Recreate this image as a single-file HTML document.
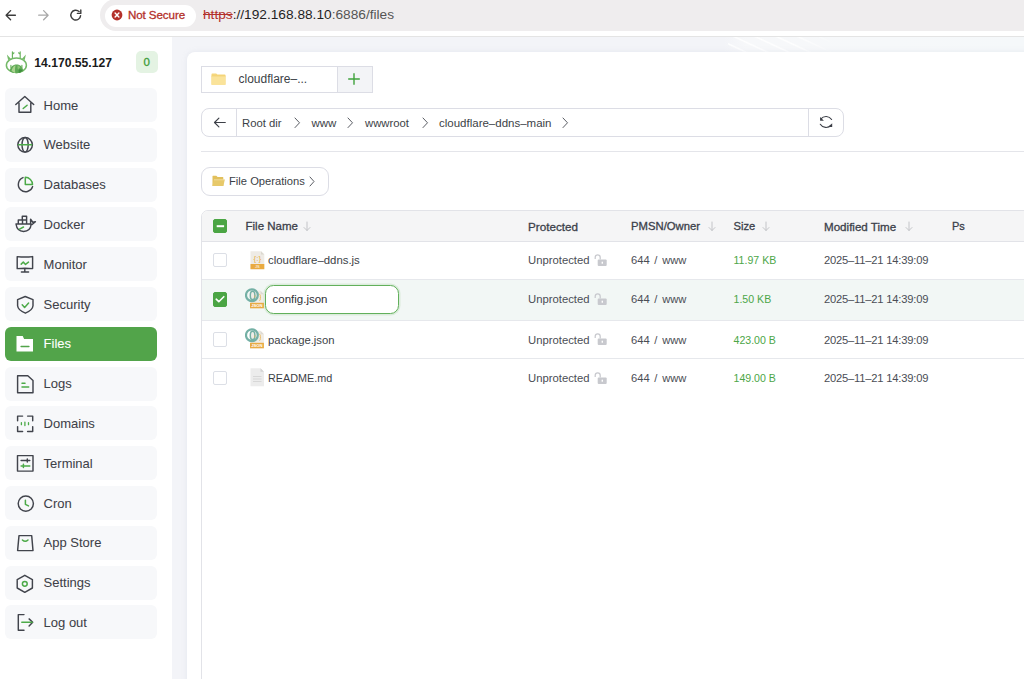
<!DOCTYPE html>
<html><head><meta charset="utf-8">
<style>
*{box-sizing:border-box;margin:0;padding:0}
html,body{width:1024px;height:679px;overflow:hidden;background:#fff;font-family:"Liberation Sans",sans-serif}
.abs{position:absolute}
#chrome{position:absolute;left:0;top:0;width:1024px;height:37px;background:#fff;border-bottom:1px solid #e4e4e4}
#omni{position:absolute;left:100px;top:-1px;width:1000px;height:32px;border-radius:16px;background:#efedee}
#chip{position:absolute;left:104.5px;top:4.5px;width:91px;height:22px;border-radius:11px;background:#fff}
#ns{position:absolute;left:128px;top:7.9px;font-size:11.6px;color:#b3302a;line-height:13px;white-space:nowrap;-webkit-text-stroke:.3px #b3302a;letter-spacing:-.1px}
#url{position:absolute;left:203px;top:7px;font-size:13.7px;line-height:16px;color:#1f1f1f;white-space:nowrap}
#url .s{color:#b3302a;text-decoration:line-through}
#url .g{color:#555}
#side{position:absolute;left:0;top:37px;width:172px;height:642px;background:#fff}
#main{position:absolute;left:172px;top:37px;width:852px;height:642px;background:linear-gradient(90deg,#f3f4f8 0px,#f3f4f8 552px,#f7f8fa 575px,#f5f8fa 852px)}
#stripes{position:absolute;left:728px;top:37px;width:110px;height:15px;background:repeating-linear-gradient(25deg,rgba(255,255,255,0) 0px,rgba(255,255,255,0) 6px,rgba(255,255,255,.9) 7.5px,rgba(255,255,255,0) 9px);-webkit-mask-image:linear-gradient(90deg,#000 60%,transparent)}
#card{position:absolute;left:186.5px;top:51.5px;width:900px;height:700px;background:#fff;border-radius:8px;box-shadow:0 0 5px rgba(200,205,220,.35)}
.ip{position:absolute;left:34.3px;top:55.8px;font-size:12.15px;font-weight:700;color:#1b1b1b;line-height:14px;white-space:nowrap}
.badge{position:absolute;left:135.8px;top:51.3px;width:22px;height:22px;border-radius:5px;background:#e4f3e3;color:#3d9c39;font-size:11.5px;line-height:22px;text-align:center;-webkit-text-stroke:.3px #3d9c39}
.nav{position:absolute;left:5.2px;width:152.3px;height:34px;border-radius:6px;background:#f7f8fa}
.nav .t{position:absolute;left:38.4px;top:9.6px;font-size:13px;line-height:15px;color:#3e4148;white-space:nowrap;-webkit-text-stroke:.05px #3e4148}
.nav svg{position:absolute;left:8.8px;top:6px;width:22px;height:22px;overflow:visible}
.nav.act{background:#52a44a}
.nav.act .t{color:#fff;-webkit-text-stroke:.1px #fff}
.ik{fill:none;stroke:#41444c;stroke-width:1.45;stroke-linecap:round;stroke-linejoin:round}
.ig{fill:none;stroke:#4caa48;stroke-width:1.5;stroke-linecap:round;stroke-linejoin:round}
.bc{top:116.5px;font-size:11.5px;line-height:13px;color:#3c3f47;white-space:nowrap}
.chev{top:116.5px;width:8px;height:12px;overflow:visible}
.chev path{fill:none;stroke:#5a5d64;stroke-width:1;stroke-linecap:round;stroke-linejoin:round}
.t12{line-height:14px;white-space:nowrap}
.cb{left:212.8px;width:14.4px;height:14.4px;border:1px solid #dcdfe6;border-radius:2px;background:#fff}
.cb.on{background:#4ba544;border-color:#4ba544}
.cb svg{position:absolute;left:-1px;top:-1px}
.th{top:219.5px;line-height:13px;color:#3c3f4a;white-space:nowrap;-webkit-text-stroke:.3px #3c3f4a}
.arr{top:220.5px;width:8px;height:11px}
.arr path{fill:none;stroke:#c3c4c8;stroke-width:1;stroke-linecap:round;stroke-linejoin:round}
.td{margin-top:.3px;line-height:14px;color:#4a4d55;white-space:nowrap}
</style></head><body>
<div id="chrome">
  <svg class="abs" style="left:0;top:0" width="100" height="36">
    <path d="M15.4 15.2H6.1M10.6 10.6L6.1 15.2 10.6 19.8" fill="none" stroke="#3c3c3c" stroke-width="1.35" stroke-linecap="round" stroke-linejoin="round"/>
    <path d="M38.7 15.2H48.1M43.6 10.6L48.1 15.2 43.6 19.8" fill="none" stroke="#a8a8a8" stroke-width="1.3" stroke-linecap="round" stroke-linejoin="round"/>
    <path d="M80.6 15.6A4.9 4.9 0 1 1 79.1 11.6" fill="none" stroke="#3c3c3c" stroke-width="1.4" stroke-linecap="round"/>
    <path d="M80.8 10v3.4h-3.4" fill="none" stroke="#3c3c3c" stroke-width="1.4" stroke-linecap="round" stroke-linejoin="round"/>
  </svg>
</div>
<div id="omni"></div>
<div id="chip"></div>
<svg class="abs" style="left:111px;top:9px" width="12" height="12"><circle cx="6" cy="6" r="5.4" fill="#b3302a"/><path d="M4.1 4.1l3.8 3.8M7.9 4.1l-3.8 3.8" stroke="#fff" stroke-width="1.4" stroke-linecap="round"/></svg>
<div id="ns">Not Secure</div>
<div id="url"><span class="s">https</span>://192.168.88.10<span class="g">:6886/files</span></div>

<div id="side"></div>
<div id="main"></div>
<div id="stripes"></div>
<div id="card"></div>
<svg class="abs" style="left:0;top:48px" width="32" height="30" viewBox="0 0 32 30">
  <ellipse cx="16.4" cy="17.2" rx="10" ry="7.3" fill="none" stroke="#74b968" stroke-width="1.5"/>
  <path d="M9.7 23.3C10 19 13 16.5 16.6 16.5C20.2 16.5 23 19 23.3 23.3Q20 25.2 16.6 25.2Q13 25.2 9.7 23.3Z" fill="#5ea955"/>
  <path d="M11.5 22.8Q12.5 18.6 15.5 17.2Q14.6 21 15.2 24.9Q12.8 24.4 11.5 22.8Z" fill="#a9d38e"/>
  <path d="M17.5 17.3Q19.5 17.8 20.4 19.5Q18.6 20 18.2 22Q17.2 20 17.5 17.3Z" fill="#8cc477"/>
  <path d="M18.6 21.5Q20.8 20.5 22.6 22.2Q21 24.6 18.8 24.9Z" fill="#3f8f3e"/>
  <path d="M12.4 9.6V3.8M12.4 6.2l1.6-1.4M20.2 9.6V3.8M20.2 6.2l-1.6-1.4M10.9 17.3V19.6M21.9 17.3V19.6" stroke="#68b25c" stroke-width="1.15" stroke-linecap="round"/>
  <path d="M11 10.9L6.9 6.4 8.1 11.9Z M21.8 10.9L25.9 6.4 24.7 11.9Z" fill="#74b968"/>
</svg>
<div class="ip">14.170.55.127</div>
<div class="badge">0</div>
<div class="nav" style="top:88px"><svg viewBox="0 0 22 22"><path class="ik" d="M1.8 10.5L10.8 2.5 19.7 10.5M5 9v9.3h11.8V9"/><path class="ig" d="M9.2 14.5l3.9-3.3"/></svg><span class="t">Home</span></div>
<div class="nav" style="top:127.8px"><svg viewBox="0 0 22 22"><circle class="ik" cx="11.1" cy="10.8" r="7.3"/><ellipse class="ik" cx="11.1" cy="10.8" rx="3.1" ry="7.3"/><path class="ig" d="M4.5 10.8h13.2"/></svg><span class="t">Website</span></div>
<div class="nav" style="top:167.6px"><svg viewBox="0 0 22 22"><path class="ik" d="M9 3.6A7.3 7.3 0 1 0 18.6 12.6"/><path class="ig" d="M11.3 3.3v7.2h7.2A7.2 7.2 0 0 0 11.3 3.3Z"/></svg><span class="t">Databases</span></div>
<div class="nav" style="top:207.4px"><svg viewBox="0 0 22 22"><path class="ik" d="M4.3 10.8V6.9h8.3v3.9M8.5 6.9v3.9M8.3 6.9V3.2h4.3v3.7M2 11h15.2Q16.5 18.4 9.6 18.4Q3 18.4 2 11ZM16.6 10.8V6.2l2.2 3 2.6-.5-3.3 2.8"/><path class="ig" d="M5.5 16.2l4-2.2"/></svg><span class="t">Docker</span></div>
<div class="nav" style="top:247.2px"><svg viewBox="0 0 22 22"><path class="ik" d="M3.2 3.6Q11 4.6 18.6 3.6V15.6Q11 14.8 3.2 15.6ZM10.8 15.6v3.2M7.4 18.9h7.2"/><path class="ig" d="M7.2 11.1l2.1-2.1 2.2 2.4 3-2.3"/></svg><span class="t">Monitor</span></div>
<div class="nav" style="top:287px"><svg viewBox="0 0 22 22"><path class="ik" d="M11.2 3.5L19 6.6v6.2Q18.6 17.2 11.4 20.2Q4 17.2 3.6 12.8V6.6Z"/><path class="ig" d="M8.2 11.7l2.4 2.7 4-4.4"/></svg><span class="t">Security</span></div>
<div class="nav act" style="top:326.8px"><svg viewBox="0 0 22 22"><path d="M2.5 3.1h6.2l1.4 2.8h8.9v12.5H2.5Z" fill="#fff"/><path d="M7.1 13.5h7.8" stroke="#52a44a" stroke-width="1.5" stroke-linecap="round"/></svg><span class="t">Files</span></div>
<div class="nav" style="top:366.6px"><svg viewBox="0 0 22 22"><path class="ik" d="M3.6 2.7h10.2L19 7.5v12.3H3.6Z"/><path class="ig" d="M8 10.2h3M8 13.9h6.7"/></svg><span class="t">Logs</span></div>
<div class="nav" style="top:406.4px"><svg viewBox="0 0 22 22"><path class="ik" d="M3.6 8.8V4.1H8.6M13.6 4.1H18.7V8.8M18.7 14.6v4.8h-5.1M8.6 19.4H3.6v-4.8"/><path class="ig" style="stroke-width:1.3" d="M7.4 10.7v2M10.9 10.1v3.4M14.5 10.7v2"/></svg><span class="t">Domains</span></div>
<div class="nav" style="top:446.2px"><svg viewBox="0 0 22 22"><path class="ik" d="M3.5 3.6H19v15.5H3.5ZM7.1 8.5h8.7M13.3 7v3"/><path class="ig" d="M7.1 13.9h8.7M9.4 12.3v3.2"/></svg><span class="t">Terminal</span></div>
<div class="nav" style="top:486px"><svg viewBox="0 0 22 22"><circle class="ik" cx="11.8" cy="11.6" r="7.6"/><path class="ig" d="M11.4 8.2v4.1l3.1 1.6"/></svg><span class="t">Cron</span></div>
<div class="nav" style="top:525.8px"><svg viewBox="0 0 22 22"><path class="ik" d="M5 3.6h12.7L19 18.6H3.6Z"/><path class="ig" d="M8.4 8Q11.2 10.6 14 8"/></svg><span class="t">App Store</span></div>
<div class="nav" style="top:565.6px"><svg viewBox="0 0 22 22"><path class="ik" d="M10.8 3.3L18.4 7.6v8.4L10.8 20.3 3.2 16V7.6Z"/><circle class="ig" cx="10.8" cy="11.8" r="2.4"/></svg><span class="t">Settings</span></div>
<div class="nav" style="top:605.4px"><svg viewBox="0 0 22 22"><path class="ik" d="M10 3.6H4.3v15.6H10M15.1 7.9l3.6 3.4-3.6 3.6"/><path class="ig" d="M7.8 11.3h10.4"/></svg><span class="t">Log out</span></div>

<div class="abs" style="left:201px;top:66px;width:172px;height:27px;border:1px solid #dcdde5;background:#fff"></div>
<div class="abs" style="left:337px;top:67px;width:35px;height:25px;background:#f3f4f7;border-left:1px solid #dcdde5"></div>
<svg class="abs" style="left:347.3px;top:72px" width="14" height="14"><path d="M7 1.2v11.6M1.2 7h11.6" stroke="#3fa23c" stroke-width="1.4"/></svg>
<svg class="abs" style="left:211.3px;top:73px" width="15" height="12"><path d="M0.5 1.2Q0.5 0.4 1.3 0.4H5.2L6.4 1.6H13.8Q14.5 1.6 14.5 2.3V11.2Q14.5 11.7 14 11.7H1Q0.5 11.7 0.5 11.2Z" fill="#f6d77e"/><path d="M0.5 3H14.5V11.2Q14.5 11.7 14 11.7H1Q0.5 11.7 0.5 11.2Z" fill="#fae39a"/><path d="M0.5 3H14.5" stroke="#f2cf6c" stroke-width=".6"/></svg>
<div class="abs t12" style="left:238.5px;top:72px;font-size:12px;color:#3c3f47">cloudflare–...</div>

<div class="abs" style="left:201px;top:108px;width:643px;height:29px;border:1px solid #dcdde5;border-radius:8px;background:#fff"></div>
<div class="abs" style="left:236px;top:109px;width:1px;height:27px;background:#dcdde5"></div>
<div class="abs" style="left:808px;top:109px;width:1px;height:27px;background:#dcdde5"></div>
<svg class="abs" style="left:213px;top:116px" width="14" height="14"><path d="M12.3 6.5H1.5M5.9 2.1L1.5 6.5 5.9 10.9" fill="none" stroke="#3c3f47" stroke-width="1.15" stroke-linecap="round" stroke-linejoin="round"/></svg>
<div class="abs bc" style="left:242px;font-size:11.3px">Root dir</div>
<svg class="abs chev" style="left:293.5px"><path d="M1 1l4.5 4.8L1 10.6"/></svg>
<div class="abs bc" style="left:311.5px">www</div>
<svg class="abs chev" style="left:347px"><path d="M1 1l4.5 4.8L1 10.6"/></svg>
<div class="abs bc" style="left:365px;font-size:11.3px">wwwroot</div>
<svg class="abs chev" style="left:421.5px"><path d="M1 1l4.5 4.8L1 10.6"/></svg>
<div class="abs bc" style="left:439px;font-size:11.5px">cloudflare–ddns–main</div>
<svg class="abs chev" style="left:562px"><path d="M1 1l4.5 4.8L1 10.6"/></svg>
<svg class="abs" style="left:818px;top:114px" width="16" height="16" viewBox="0 0 16 16"><path d="M13.6 5.5A6.7 6.7 0 0 0 2.9 4.9M2.3 10.3A6.7 6.7 0 0 0 13.1 11.1" fill="none" stroke="#3c3f47" stroke-width="1.15" stroke-linecap="round"/><path d="M2.1 2.9V6.7H5.9Z M14.2 9.3V13.1H10.4Z" fill="#3c3f47"/></svg>
<div class="abs" style="left:201px;top:151px;width:823px;height:1px;background:#e4e5ea"></div>

<div class="abs" style="left:201px;top:167px;width:128px;height:29px;border:1px solid #dcdde5;border-radius:9px;background:#fff"></div>
<svg class="abs" style="left:211.5px;top:175px" width="14" height="12"><path d="M0.5 1.3Q0.5 0.8 1 0.8H4.3L5.6 2H10.8Q11.3 2 11.3 2.5V10.9H0.5Z" fill="#e2c05c"/><path d="M1.7 4.5H12.9L11.3 10.9H0.5Z" fill="#e7c96a"/><path d="M2 4.8H12.5" stroke="#f4e4b0" stroke-width=".7"/></svg>
<div class="abs bc" style="left:229px;top:175px;font-size:11.2px">File Operations</div>
<svg class="abs chev" style="left:309px;top:176px;width:7px"><path d="M1 1l4 4.5L1 10"/></svg>

<div class="abs" style="left:201px;top:210px;width:900px;height:600px;border:1px solid #e2e3e8;border-radius:7px;background:#fff;overflow:hidden">
  <div class="abs" style="left:0;top:0;width:900px;height:31px;background:#f5f5f6;border-bottom:1px solid #e2e3e8"></div>
  <div class="abs" style="left:0;top:68px;width:900px;height:1px;background:#e6e8ec"></div>
  <div class="abs" style="left:0;top:69px;width:900px;height:41px;background:#f2f7f5;border-bottom:1px solid #e6e8ec"></div>
  <div class="abs" style="left:0;top:147px;width:900px;height:1px;background:#e6e8ec"></div>
</div>
<div class="abs cb on" style="top:218.5px"><svg width="14" height="14"><path d="M3.7 7.2h7.4" stroke="#fff" stroke-width="2"/></svg></div>
<div class="abs th" style="left:245.5px;font-size:11.5px">File Name</div>
<svg class="abs arr" style="left:303px"><path d="M4 1v8.5M1 6.5l3 3 3-3"/></svg>
<div class="abs th" style="left:528px;font-size:11.7px">Protected</div>
<div class="abs th" style="left:631px;font-size:11.3px">PMSN/Owner</div>
<svg class="abs arr" style="left:708px"><path d="M4 1v8.5M1 6.5l3 3 3-3"/></svg>
<div class="abs th" style="left:733.5px;font-size:11.2px">Size</div>
<svg class="abs arr" style="left:762px"><path d="M4 1v8.5M1 6.5l3 3 3-3"/></svg>
<div class="abs th" style="left:824px;font-size:11.6px">Modified Time</div>
<svg class="abs arr" style="left:904.5px"><path d="M4 1v8.5M1 6.5l3 3 3-3"/></svg>
<div class="abs th" style="left:952px;font-size:11px">Ps</div>
<div class="abs cb" style="top:253px"></div>
<svg class="abs" style="left:249.5px;top:251.4px" width="15" height="19" viewBox="0 0 15 19"><path d="M0.5 0.3H11L14.3 3.6V18.2H0.5Z" fill="#eeebe5"/><path d="M11 0.3V3.6H14.3Z" fill="#dcd8d0"/><path d="M0.5 13H14.3V18.2H0.5Z" fill="#e9aa40"/><text x="7.4" y="9.8" font-size="8" fill="#e9b048" text-anchor="middle" font-family="Liberation Sans">{:}</text><text x="7.4" y="17.4" font-size="4" fill="#fff" text-anchor="middle" font-family="Liberation Sans">JS</text></svg>
<div class="abs td" style="left:268px;top:253.0px;font-size:11.4px;color:#3c3f47">cloudflare–ddns.js</div>
<div class="abs td" style="left:528px;top:253.0px;font-size:11.3px">Unprotected</div>
<svg class="abs" style="left:594px;top:254.0px" width="14" height="13" viewBox="0 0 14 13"><path d="M1.2 5V3.4A2.5 2.5 0 0 1 6.2 3.4V5.6" fill="none" stroke="#c8c9ce" stroke-width="1.25"/><rect x="3.7" y="5.4" width="9" height="6.5" rx="1" fill="#c8c9ce"/><rect x="7.6" y="7.7" width="1.4" height="2" fill="#fff"/></svg>
<div class="abs td" style="left:631px;top:253.0px;font-size:11.2px;word-spacing:1.6px">644 / www</div>
<div class="abs td" style="left:733.5px;top:253.0px;font-size:10.6px;color:#4ca648">11.97 KB</div>
<div class="abs td" style="left:824px;top:253.0px;font-size:11.2px;letter-spacing:-.2px">2025–11–21 14:39:09</div>
<div class="abs cb on" style="top:292.2px"><svg width="14" height="14"><path d="M3.2 7.2l2.6 2.5 5-5" fill="none" stroke="#fff" stroke-width="1.6" stroke-linecap="round" stroke-linejoin="round"/></svg></div>
<svg class="abs" style="left:245px;top:287.6px" width="20" height="22" viewBox="0 0 20 22"><path d="M5 2.8H15.5L18.9 6.2V20.3H5Z" fill="#efece6"/><path d="M15.5 2.8V6.2H18.9Z" fill="#dedad2"/><path d="M5 14.8H18.9V20.3H5Z" fill="#e8ab45"/><text x="11.9" y="19" font-size="4.2" fill="#fff" text-anchor="middle" font-family="Liberation Sans" font-weight="700">JSON</text><path d="M14.3 6.3q1 0 1 1.1v1.2q0 .8.7.8q-.7 0-.7.8v1.2q0 1.1-1 1.1" stroke="#e9b048" stroke-width=".75" fill="none"/><circle cx="6.9" cy="7.2" r="5.9" fill="none" stroke="#74b0a5" stroke-width="2.2"/><ellipse cx="7.6" cy="7.4" rx="2.3" ry="4.1" fill="none" stroke="#74b0a5" stroke-width="1.5"/><path d="M9.8 7.4v2.4" stroke="#e9b048" stroke-width=".7"/></svg>
<div class="abs" style="left:264.9px;top:284.7px;width:134.4px;height:29px;border:1.6px solid #62b05b;border-radius:8.5px;background:#fff;box-shadow:0 0 0 1.5px rgba(102,179,95,.16)"></div>
<div class="abs td" style="left:272.5px;top:292.2px;font-size:11.5px;color:#2f3137">config.json</div>
<div class="abs td" style="left:528px;top:292.2px;font-size:11.3px">Unprotected</div>
<svg class="abs" style="left:594px;top:293.2px" width="14" height="13" viewBox="0 0 14 13"><path d="M1.2 5V3.4A2.5 2.5 0 0 1 6.2 3.4V5.6" fill="none" stroke="#c8c9ce" stroke-width="1.25"/><rect x="3.7" y="5.4" width="9" height="6.5" rx="1" fill="#c8c9ce"/><rect x="7.6" y="7.7" width="1.4" height="2" fill="#fff"/></svg>
<div class="abs td" style="left:631px;top:292.2px;font-size:11.2px;word-spacing:1.6px">644 / www</div>
<div class="abs td" style="left:733.5px;top:292.2px;font-size:10.6px;color:#4ca648">1.50 KB</div>
<div class="abs td" style="left:824px;top:292.2px;font-size:11.2px;letter-spacing:-.2px">2025–11–21 14:39:09</div>
<div class="abs cb" style="top:332.3px"></div>
<svg class="abs" style="left:245px;top:327.7px" width="20" height="22" viewBox="0 0 20 22"><path d="M5 2.8H15.5L18.9 6.2V20.3H5Z" fill="#efece6"/><path d="M15.5 2.8V6.2H18.9Z" fill="#dedad2"/><path d="M5 14.8H18.9V20.3H5Z" fill="#e8ab45"/><text x="11.9" y="19" font-size="4.2" fill="#fff" text-anchor="middle" font-family="Liberation Sans" font-weight="700">JSON</text><path d="M14.3 6.3q1 0 1 1.1v1.2q0 .8.7.8q-.7 0-.7.8v1.2q0 1.1-1 1.1" stroke="#e9b048" stroke-width=".75" fill="none"/><circle cx="6.9" cy="7.2" r="5.9" fill="none" stroke="#74b0a5" stroke-width="2.2"/><ellipse cx="7.6" cy="7.4" rx="2.3" ry="4.1" fill="none" stroke="#74b0a5" stroke-width="1.5"/><path d="M9.8 7.4v2.4" stroke="#e9b048" stroke-width=".7"/></svg>
<div class="abs td" style="left:268px;top:332.3px;font-size:11.3px;color:#3c3f47">package.json</div>
<div class="abs td" style="left:528px;top:332.3px;font-size:11.3px">Unprotected</div>
<svg class="abs" style="left:594px;top:333.3px" width="14" height="13" viewBox="0 0 14 13"><path d="M1.2 5V3.4A2.5 2.5 0 0 1 6.2 3.4V5.6" fill="none" stroke="#c8c9ce" stroke-width="1.25"/><rect x="3.7" y="5.4" width="9" height="6.5" rx="1" fill="#c8c9ce"/><rect x="7.6" y="7.7" width="1.4" height="2" fill="#fff"/></svg>
<div class="abs td" style="left:631px;top:332.3px;font-size:11.2px;word-spacing:1.6px">644 / www</div>
<div class="abs td" style="left:733.5px;top:332.3px;font-size:10.6px;color:#4ca648">423.00 B</div>
<div class="abs td" style="left:824px;top:332.3px;font-size:11.2px;letter-spacing:-.2px">2025–11–21 14:39:09</div>
<div class="abs cb" style="top:370.5px"></div>
<svg class="abs" style="left:249.5px;top:367.9px" width="15" height="19" viewBox="0 0 15 19"><path d="M0.5 0.3H10.5L14 3.8V18.3H0.5Z" fill="#ececec"/><path d="M10.5 0.3V3.8H14Z" fill="#d4d4d4"/><path d="M3 8.5h8.5M3 11h8.5M3 13.5h8.5" stroke="#d2d2d2" stroke-width=".8"/></svg>
<div class="abs td" style="left:268px;top:370.5px;font-size:10.8px;color:#3c3f47">README.md</div>
<div class="abs td" style="left:528px;top:370.5px;font-size:11.3px">Unprotected</div>
<svg class="abs" style="left:594px;top:371.5px" width="14" height="13" viewBox="0 0 14 13"><path d="M1.2 5V3.4A2.5 2.5 0 0 1 6.2 3.4V5.6" fill="none" stroke="#c8c9ce" stroke-width="1.25"/><rect x="3.7" y="5.4" width="9" height="6.5" rx="1" fill="#c8c9ce"/><rect x="7.6" y="7.7" width="1.4" height="2" fill="#fff"/></svg>
<div class="abs td" style="left:631px;top:370.5px;font-size:11.2px;word-spacing:1.6px">644 / www</div>
<div class="abs td" style="left:733.5px;top:370.5px;font-size:10.6px;color:#4ca648">149.00 B</div>
<div class="abs td" style="left:824px;top:370.5px;font-size:11.2px;letter-spacing:-.2px">2025–11–21 14:39:09</div>
</body></html>
